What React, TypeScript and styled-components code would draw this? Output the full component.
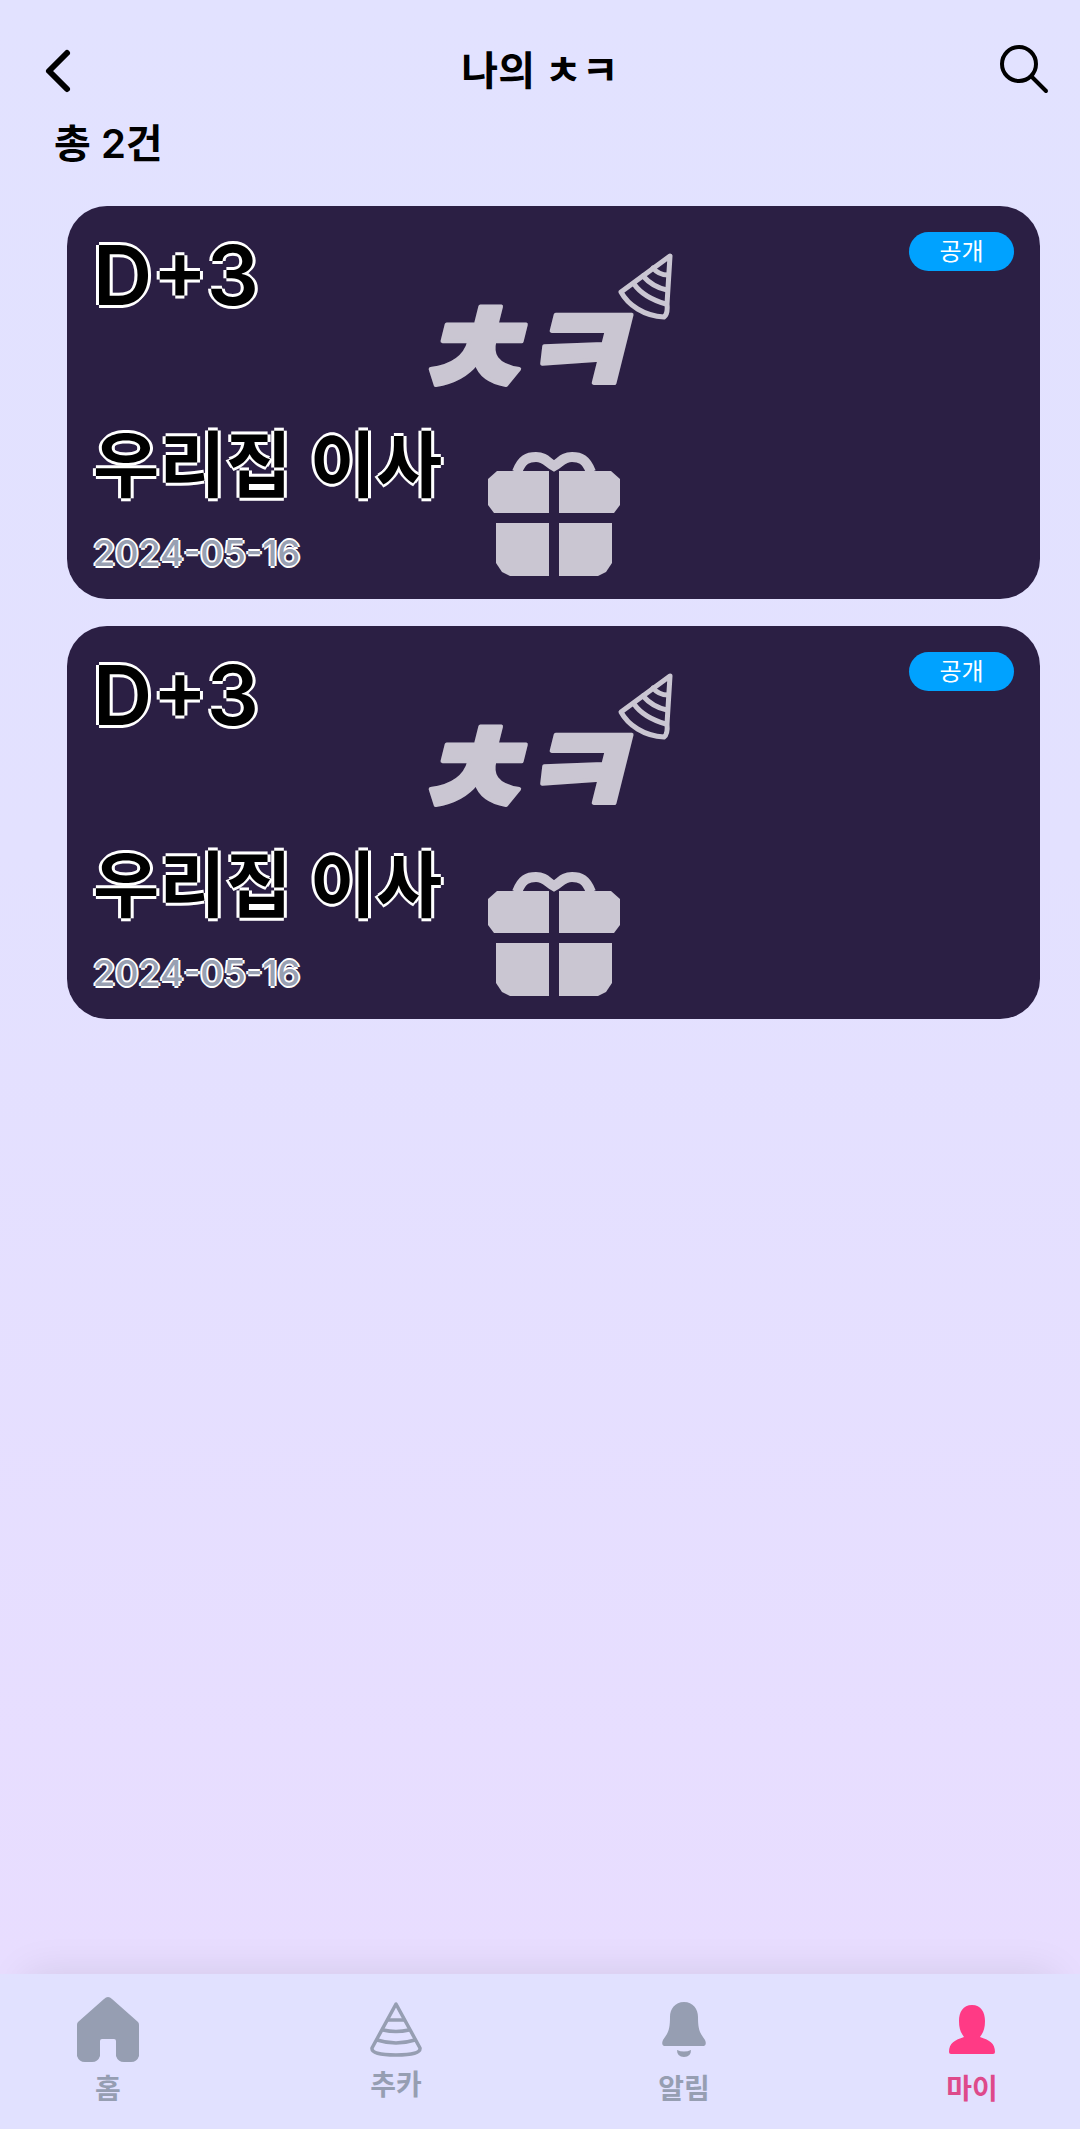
import React from "react";
import styled, { createGlobalStyle } from "styled-components";

const GlobalStyle = createGlobalStyle`
  * { box-sizing: border-box; }
  body {
    margin: 0;
    font-family: Inter, "Noto Sans CJK KR", sans-serif;
    color: #000;
  }
  h1, h2, p { margin: 0; }
`;

const Page = styled.div`
  min-height: 100vh;
  display: flex;
  flex-direction: column;
  background: linear-gradient(180deg, #e2e2ff 0%, #e3e1ff 40%, #e8ddff 92%);
`;

const Header = styled.header`
  display: grid;
  grid-template-columns: 64px 1fr 64px;
  align-items: center;
  height: 114px;
  padding: 28px 24px 0;
`;

const Title = styled.h1`
  font-size: 40px;
  line-height: 56px;
  font-weight: 600;
  text-align: center;
`;

const IconButton = styled.button`
  display: flex;
  align-items: center;
  justify-content: center;
  width: 64px;
  height: 64px;
  padding: 0;
  border: 0;
  background: none;
`;

const Main = styled.main`
  flex: 1;
  display: flex;
  flex-direction: column;
  gap: 32px;
  padding-bottom: 40px;
`;

const Total = styled.p`
  padding: 0 54px;
  font-size: 40px;
  line-height: 60px;
  font-weight: 600;
`;

const CardList = styled.ul`
  list-style: none;
  display: flex;
  flex-direction: column;
  gap: 27px;
  margin: 0;
  padding: 0 40px 0 67px;
`;

const Card = styled.li`
  display: grid;
  border-radius: 40px;
  overflow: hidden;
  background: #2b1f44;
`;

const Art = styled.svg`
  grid-area: 1 / 1;
  justify-self: center;
  width: 340px;
  height: 393px;
`;

const ArtLetters = styled.text`
  font-family: "Noto Sans CJK KR", sans-serif;
  font-size: 128px;
  font-style: italic;
  font-weight: 900;
`;

const CardBody = styled.div`
  grid-area: 1 / 1;
  display: flex;
  flex-direction: column;
  justify-content: space-between;
  padding: 20px 26px 24px;
`;

const CardTop = styled.div`
  display: flex;
  justify-content: space-between;
  align-items: flex-start;
`;

const outline = (size: number) =>
  `text-shadow: -${size}px 0 #fff, 0 ${size}px #fff, ${size}px 0 #fff, 0 -${size}px #fff;`;

const DayCount = styled.p`
  font-size: 82px;
  line-height: 100px;
  font-weight: 600;
  ${outline(3)}
`;

const CardName = styled.h2`
  font-size: 72px;
  line-height: 100px;
  font-weight: 600;
  ${outline(3)}
`;

const CardDate = styled.time`
  display: block;
  margin-top: 16px;
  font-size: 36px;
  line-height: 44px;
  font-weight: 500;
  color: #98a0b2;
  ${outline(2)}
`;

const Badge = styled.span`
  width: 105px;
  margin-top: 6px;
  border-radius: 20px;
  background: #00a2ff;
  color: #fff;
  font-size: 24px;
  line-height: 39px;
  text-align: center;
`;

const TabBar = styled.nav`
  display: flex;
  justify-content: space-between;
  height: 155px;
  padding: 20px 76px 0;
  background: #e1e1ff;
  box-shadow: 0 -26px 40px -26px rgba(0, 0, 0, 0.1);
`;

const Tab = styled.a<{ $active?: boolean; $raised?: boolean }>`
  display: flex;
  flex-direction: column;
  align-items: center;
  gap: ${(p) => (p.$raised ? 3 : 7)}px;
  width: 64px;
  color: ${(p) => (p.$active ? "#ff3a85" : "#969eb2")};
  text-decoration: none;
`;

const TabLabel = styled.span<{ $active?: boolean }>`
  font-size: 28px;
  line-height: 40px;
  font-weight: 600;
  white-space: nowrap;
  color: ${(p) => (p.$active ? "#de4a8b" : "inherit")};
`;

const PartyArt = () => (
  <Art viewBox="-40 0 340 393" aria-hidden="true" fill="#cac6d2" stroke="#cac6d2">
    <ArtLetters x="-15 88" y="192" strokeWidth="4" strokeLinejoin="round">
      ㅊㅋ
    </ArtLetters>
    <g fill="none" strokeWidth="5" strokeLinejoin="round" strokeLinecap="round">
      <path d="M246 50 L197 86 C204 99 220 110 240 111 Q244 108 243 98 Z" />
      <path d="M210 78 C217 88 228 94 242 98" />
      <path d="M219 70 C226 78 233 82 243 84" />
      <path d="M229 62 C233 67 237 69 244 69" />
    </g>
    <g stroke="none">
      <path d="M73 265 H125 V307 H70 L64 299 V273 Z" />
      <path d="M135 265 H187 L196 273 V299 L190 307 H135 Z" />
      <path d="M72 317 H125 V370 H86 L78 366 L72 357 Z" />
      <path d="M135 317 H188 V357 L182 366 L174 370 H135 Z" />
    </g>
    <path
      d="M93 266 C98 253 104 251 112 251 C121 251 123 256 130 260 C137 256 139 251 148 251 C156 251 162 253 167 266"
      fill="none"
      strokeWidth="10"
    />
  </Art>
);

type CardData = { id: number; day: string; name: string; date: string; status: string };

const cards: CardData[] = [
  { id: 1, day: "D+3", name: "우리집 이사", date: "2024-05-16", status: "공개" },
  { id: 2, day: "D+3", name: "우리집 이사", date: "2024-05-16", status: "공개" },
];

const HomeIcon = () => (
  <svg width="64" height="68" viewBox="0 0 64 68" fill="currentColor" aria-hidden="true">
    <path d="M32 3 Q34 3 36 5 L62 28 Q63 29 63 31 V62 Q61 68 55 68 H48 Q42 68 40 62 V47 Q40 45 38 45 H26 Q24 45 24 47 V62 Q22 68 16 68 H9 Q3 68 1 62 V31 Q1 29 2 28 L28 5 Q30 3 32 3 Z" />
  </svg>
);

const HatIcon = () => (
  <svg width="64" height="68" viewBox="0 0 64 68" fill="none" stroke="currentColor" strokeWidth="3.5" strokeLinejoin="round" aria-hidden="true">
    <path d="M32 10 L8 54 Q7 61 32 61 Q57 61 56 54 Z" />
    <path d="M24 26 H40" />
    <path d="M19 36 Q32 39 45 36" />
    <path d="M13 46 Q32 52 51 46" />
  </svg>
);

const BellIcon = () => (
  <svg width="64" height="68" viewBox="0 0 64 68" fill="currentColor" aria-hidden="true">
    <path d="M32 8 C41 8 46 15 46 23 C46 36 48 39 53 46 Q55 51 52 52 H12 Q9 51 11 46 C16 39 18 36 18 23 C18 15 23 8 32 8 Z" />
    <path d="M25 56 Q32 59 39 56 Q39 63 32 63 Q25 63 25 56 Z" />
  </svg>
);

const PersonIcon = () => (
  <svg width="64" height="68" viewBox="0 0 64 68" fill="currentColor" aria-hidden="true">
    <path d="M32 11 C41 11 45 18 45 27 C45 35 43 39 40 43 C49 46 55 49 55 58 Q55 60 53 60 H11 Q9 60 9 58 C9 49 15 46 24 43 C21 39 19 35 19 27 C19 18 23 11 32 11 Z" />
  </svg>
);

export default function App() {
  return (
    <Page>
      <GlobalStyle />
      <Header>
        <IconButton type="button" aria-label="뒤로">
          <svg width="64" height="64" viewBox="0 0 64 64" fill="none" stroke="#000" strokeWidth="6" strokeLinecap="round" strokeLinejoin="round">
            <path d="M43 14 L25 32 L43 50" />
          </svg>
        </IconButton>
        <Title>나의 ㅊㅋ</Title>
        <IconButton type="button" aria-label="검색">
          <svg width="64" height="64" viewBox="0 0 64 64" fill="none" stroke="#000" strokeWidth="4" strokeLinecap="round">
            <circle cx="27" cy="25" r="17" />
            <path d="M40 38 L54 52" />
          </svg>
        </IconButton>
      </Header>
      <Main>
        <Total>총 2건</Total>
        <CardList>
          {cards.map((card) => (
            <Card key={card.id}>
              <PartyArt />
              <CardBody>
                <CardTop>
                  <DayCount>{card.day}</DayCount>
                  <Badge>{card.status}</Badge>
                </CardTop>
                <div>
                  <CardName>{card.name}</CardName>
                  <CardDate dateTime={card.date}>{card.date}</CardDate>
                </div>
              </CardBody>
            </Card>
          ))}
        </CardList>
      </Main>
      <TabBar>
        <Tab href="#home">
          <HomeIcon />
          <TabLabel>홈</TabLabel>
        </Tab>
        <Tab href="#celebrate" $raised>
          <HatIcon />
          <TabLabel>추카</TabLabel>
        </Tab>
        <Tab href="#alerts">
          <BellIcon />
          <TabLabel>알림</TabLabel>
        </Tab>
        <Tab href="#my" $active aria-current="page">
          <PersonIcon />
          <TabLabel $active>마이</TabLabel>
        </Tab>
      </TabBar>
    </Page>
  );
}
